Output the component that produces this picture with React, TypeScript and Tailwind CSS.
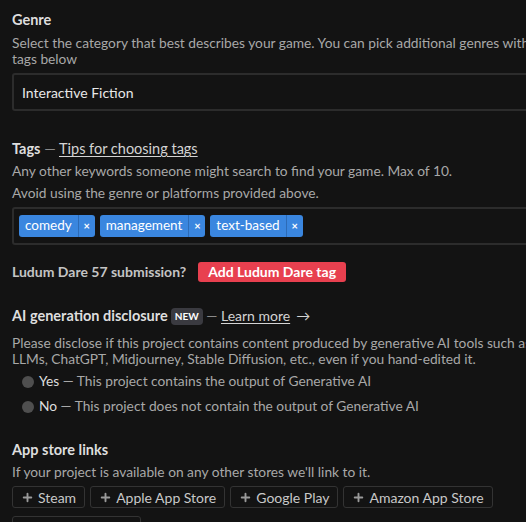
import { Plus } from "lucide-react"

const tags = ["comedy", "management", "text-based"]
const stores = ["Steam", "Apple App Store", "Google Play", "Amazon App Store", "Windows Store"]

function Heading({ children }: { children: React.ReactNode }) {
  return <div className="text-[14.5px] leading-[18px] font-bold text-[#dedede]">{children}</div>
}

function Dash() {
  return <span className="font-normal text-[#8a8a8a]"> — </span>
}

export default function App() {
  return (
    <div className="min-h-screen w-full overflow-hidden bg-[#131313] font-['Lato',sans-serif] text-[14px]">
      <div className="w-[620px] pl-3 pt-[11px]">
        {/* Genre */}
        <Heading>Genre</Heading>
        <p className="mt-[6px] w-[533px] text-[13.75px] leading-[16px] text-[#a8a8a8]">
          Select the category that best describes your game. You can pick additional genres with tags below
        </p>
        <div className="mt-[6px] flex h-[38px] items-center rounded-[3px] border-2 border-[#2c2c2c] px-[8px] text-[#e8e8e8]">
          Interactive Fiction
        </div>

        {/* Tags */}
        <div className="mt-[29px]">
          <Heading>
            Tags<Dash />
            <a className="font-normal text-[#d4d4d4] underline underline-offset-2">Tips for choosing tags</a>
          </Heading>
        </div>
        <p className="mt-[2px] text-[13.75px] leading-[22px] text-[#a8a8a8]">
          Any other keywords someone might search to find your game. Max of 10.
        </p>
        <p className="text-[13.75px] leading-[22px] text-[#a8a8a8]">
          Avoid using the genre or platforms provided above.
        </p>
        <div className="mt-[3px] flex h-[38px] items-center gap-[5px] rounded-[3px] border-2 border-[#2c2c2c] px-[5px]">
          {tags.map((t) => (
            <span key={t} className="flex h-[22px] items-stretch rounded-[3px] bg-[#3a86df] text-[13.5px] text-white">
              <span className="flex items-center px-[6px] leading-none">{t}</span>
              <span className="flex w-[17px] items-center justify-center border-l border-[#2d6bb6] text-[11px] font-bold">
                ×
              </span>
            </span>
          ))}
        </div>

        {/* Ludum Dare */}
        <div className="mt-[16px] flex items-center gap-[12px]">
          <span className="font-bold text-[#c4c4c4]">Ludum Dare 57 submission?</span>
          <button className="h-[20px] rounded-[3px] bg-[#e8404f] px-[10px] text-[14px] leading-none font-bold text-white">
            Add Ludum Dare tag
          </button>
        </div>

        {/* AI disclosure */}
        <div className="mt-[25px] leading-[18px]">
          <span className="text-[14.5px] font-bold text-[#dedede]">AI generation disclosure</span>
          <span className="ml-[3px] inline-block rounded-[4px] bg-[#3a3a40] px-[4px] py-[2px] align-[1px] text-[10px] leading-[13px] font-bold text-white">
            NEW
          </span>
          <Dash />
          <a className="text-[#d4d4d4] underline underline-offset-2">Learn more</a>
          <span className="ml-[6px] text-[#d4d4d4]">→</span>
        </div>
        <p className="mt-[10px] text-[13.75px] leading-[16px] text-[#a8a8a8]">
          Please disclose if this project contains content produced by generative AI tools such as
          <br />
          LLMs, ChatGPT, Midjourney, Stable Diffusion, etc., even if you hand-edited it.
        </p>
        <div className="mt-[4px] flex flex-col gap-[4px] pl-[10px] text-[13.75px]">
          {[
            ["Yes", "This project contains the output of Generative AI"],
            ["No", "This project does not contain the output of Generative AI"],
          ].map(([a, b]) => (
            <label key={a} className="flex h-[21px] items-center gap-[5px]">
              <span className="h-[12px] w-[12px] rounded-full bg-[#4f4f4f]" />
              <span>
                <span className="text-[#dedede]">{a}</span>
                <span className="text-[#a8a8a8]"> — {b}</span>
              </span>
            </label>
          ))}
        </div>

        {/* App store links */}
        <div className="mt-[24px]">
          <Heading>App store links</Heading>
        </div>
        <p className="mt-[4px] text-[13.75px] leading-[18px] text-[#a8a8a8]">
          If your project is available on any other stores we'll link to it.
        </p>
        <div className="mt-[5px] flex w-[514px] flex-wrap gap-x-[5px] gap-y-[8px]">
          {stores.map((s) => (
            <button
              key={s}
              className="flex h-[22px] items-center gap-[4px] rounded-[3px] border border-[#333] px-[8px] text-[#c8c8c8]"
            >
              <Plus size={13} strokeWidth={3.5} className="text-[#9a9a9a]" />
              {s}
            </button>
          ))}
        </div>
      </div>
    </div>
  )
}
